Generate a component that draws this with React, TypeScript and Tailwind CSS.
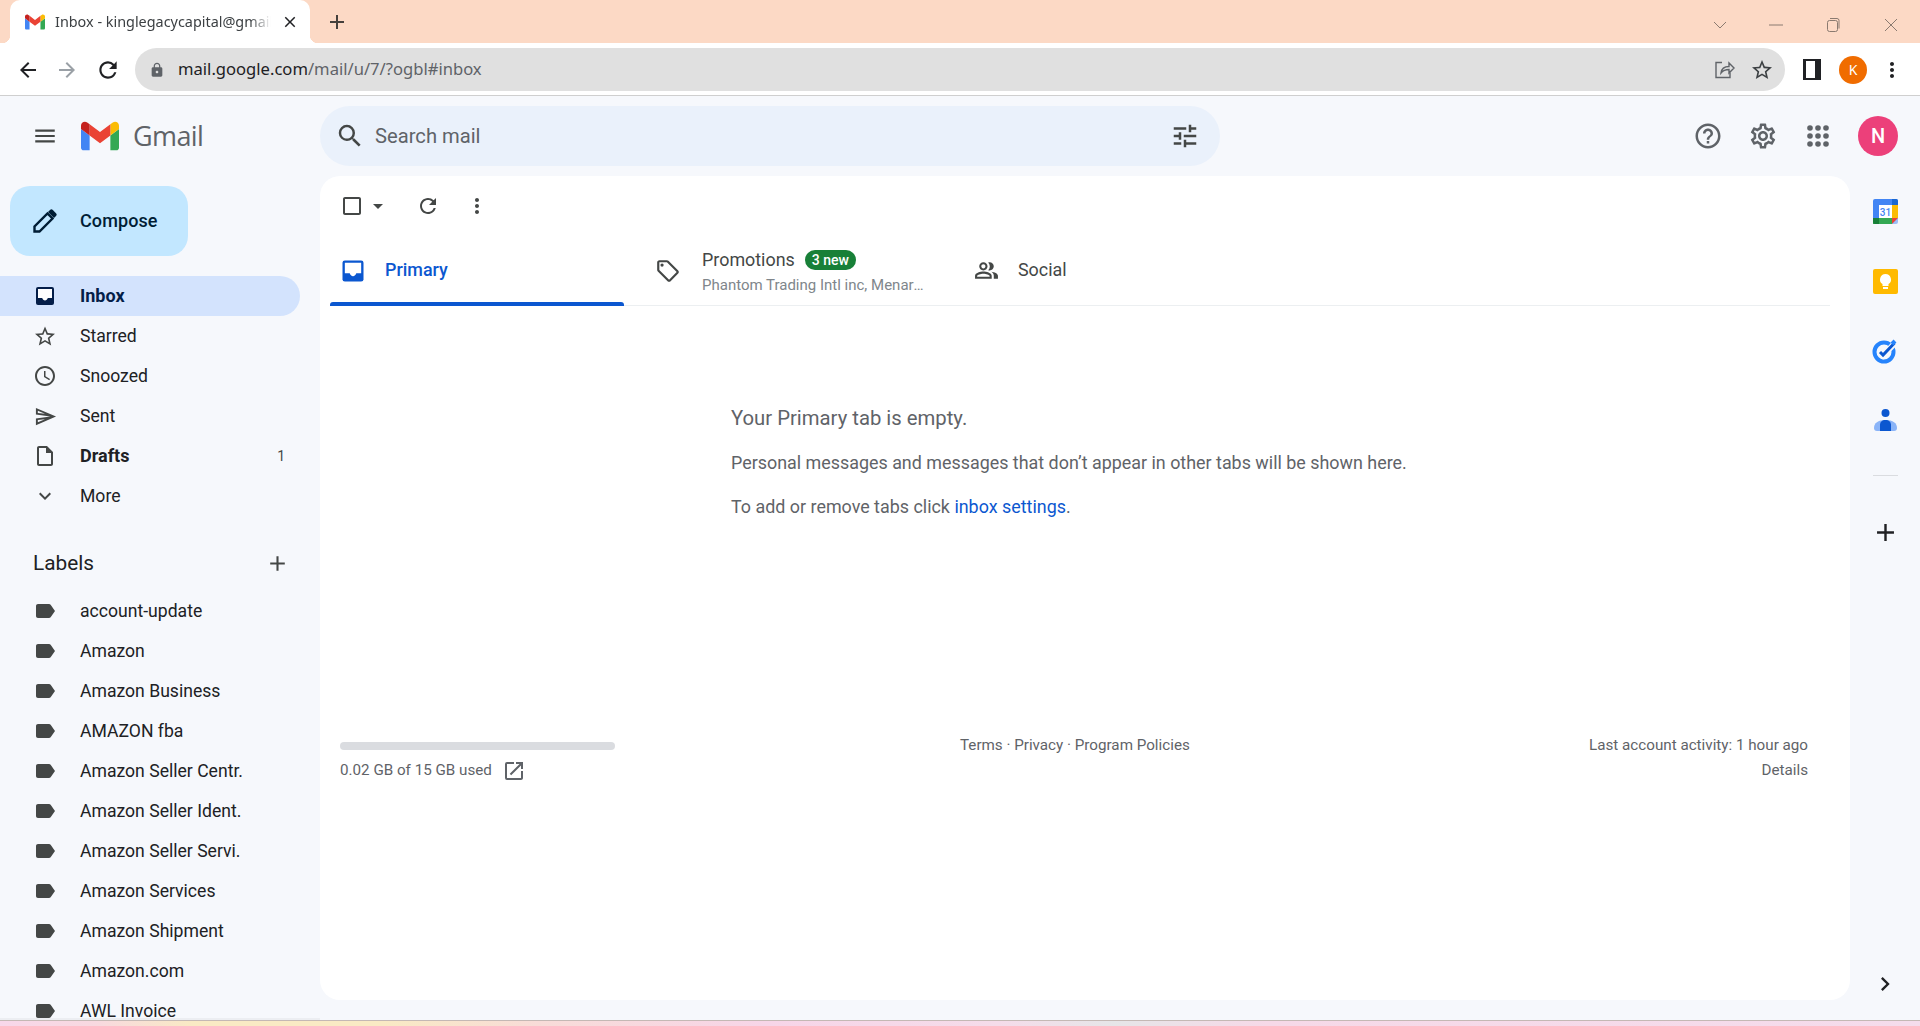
import type { ReactNode } from "react";
import {
  MdAccessTime,
  MdAdd,
  MdArrowBack,
  MdArrowDropDown,
  MdArrowForward,
  MdCheckBoxOutlineBlank,
  MdChevronRight,
  MdClose,
  MdExpandMore,
  MdLabel,
  MdLock,
  MdMenu,
  MdMoreVert,
  MdOpenInNew,
  MdOutlineHelpOutline,
  MdOutlineInsertDriveFile,
  MdOutlineLocalOffer,
  MdOutlinePeopleAlt,
  MdOutlineSend,
  MdOutlineSettings,
  MdRefresh,
  MdSearch,
  MdStarBorder,
  MdTune,
} from "react-icons/md";

const LABELS = [
  "account-update",
  "Amazon",
  "Amazon Business",
  "AMAZON fba",
  "Amazon Seller Centr.",
  "Amazon Seller Ident.",
  "Amazon Seller Servi.",
  "Amazon Services",
  "Amazon Shipment",
  "Amazon.com",
  "AWL Invoice",
];

function GmailLogo({ size }: { size: number }) {
  return (
    <svg width={size} height={size} viewBox="0 0 24 24">
      <path fill="#4285f4" d="M1.636 21.002h3.819v-9.273L0 7.638v11.728c0 .904.732 1.636 1.636 1.636" />
      <path fill="#34a853" d="M18.545 21.002h3.819c.904 0 1.636-.732 1.636-1.636V7.638l-5.455 4.091" />
      <path fill="#fbbc04" d="M18.545 4.638v7.091L24 7.638V5.457c0-2.023-2.309-3.178-3.927-1.964" />
      <path fill="#ea4335" d="M5.455 11.729V4.638L12 9.548l6.545-4.91v7.091L12 16.64" />
      <path fill="#c5221f" d="M0 5.457v2.181l5.455 4.091V4.638L3.927 3.493C2.309 2.28 0 3.434 0 5.457" />
    </svg>
  );
}

function InboxIcon({ size, color }: { size: number; color: string }) {
  return (
    <svg width={size} height={size} viewBox="0 0 24 24">
      <rect x="3" y="3" width="18" height="18" rx="2" fill={color} />
      <path d="M5 5h14v9h-4.200c-.5 1.400-1.500 2.500-2.800 2.500S9.700 15.400 9.200 14H5z" fill="#fff" />
    </svg>
  );
}

function PencilIcon() {
  return (
    <svg width="24" height="24" viewBox="0 0 24 24">
      <path d="M1.500 22.500v-5L14.500 4.500l5 5-13 13z" fill="none" stroke="currentColor" strokeWidth="2.400" />
      <path d="M15 3l2-2a2 2 0 0 1 2.800 0l3.200 3.200a2 2 0 0 1 0 2.800l-2 2z" fill="currentColor" />
    </svg>
  );
}

function AppsIcon() {
  return (
    <svg width="30" height="30" viewBox="0 0 30 30" fill="#5f6368">
      {[7, 15, 23].map((y) =>
        [7, 15, 23].map((x) => <circle key={`${x}-${y}`} cx={x} cy={y} r="2.800" />),
      )}
    </svg>
  );
}

function TitleBar() {
  return (
    <div className="flex h-[43px] items-end bg-[#fcd9c5]">
      <div className="relative ml-[10px] flex h-[43px] w-[300px] items-center rounded-t-[10px] bg-white">
        <div className="absolute bottom-0 left-[-8px] h-[8px] w-[8px] bg-[radial-gradient(circle_at_0_0,transparent_8px,white_8.5px)]" />
        <div className="absolute bottom-0 right-[-8px] h-[8px] w-[8px] bg-[radial-gradient(circle_at_100%_0,transparent_8px,white_8.5px)]" />
        <div className="ml-[15px] flex w-[20px] justify-center">
          <GmailLogo size={20} />
        </div>
        <div className="ml-[10px] w-[216px] overflow-hidden whitespace-nowrap font-['Noto_Sans',sans-serif] text-[14.4px] text-[#3c4043] [mask-image:linear-gradient(90deg,#000_90%,transparent)]">
          Inbox - kinglegacycapital@gmail.com - Gmail
        </div>
        <MdClose className="ml-[10px] text-[#202124]" size={18} />
      </div>
      <div className="ml-[15px] flex h-[43px] items-center">
        <MdAdd className="text-[#45403c]" size={24} />
      </div>
      <div className="ml-auto flex h-[36px] items-center pr-[21px] text-[#8a7a70]">
        <svg width="16" height="16" viewBox="0 0 16 16" fill="none" stroke="currentColor" strokeWidth="1">
          <path d="M2 5l6 6 6-6" />
        </svg>
        <svg className="ml-[40px]" width="16" height="16" viewBox="0 0 16 16" fill="none" stroke="currentColor" strokeWidth="1">
          <path d="M1 8h14" />
        </svg>
        <svg className="ml-[41px]" width="16" height="16" viewBox="0 0 16 16" fill="none" stroke="currentColor" strokeWidth="1">
          <rect x="2.5" y="3.5" width="10" height="11" rx="2" />
          <path d="M5 1.5h7a2 2 0 0 1 2 2v8" />
        </svg>
        <svg className="ml-[42px]" width="16" height="16" viewBox="0 0 16 16" fill="none" stroke="currentColor" strokeWidth="1">
          <path d="M2 2l12 12M14 2L2 14" />
        </svg>
      </div>
    </div>
  );
}

function AddressBar() {
  return (
    <div className="flex h-[53px] items-start border-b border-[#cfcfcf] bg-white pt-[5px]">
      <div className="flex h-[43px] w-[135px] items-center pl-[16px]">
        <MdArrowBack className="text-[#202124]" size={24} />
        <MdArrowForward className="ml-[15px] text-[#9aa0a6]" size={24} />
        <MdRefresh className="ml-[16px] text-[#202124]" size={26} />
      </div>
      <div className="flex h-[43px] w-[1650px] items-center rounded-full bg-[#e0e0e0] pl-[14px] pr-[11px]">
        <MdLock className="text-[#5f6368]" size={16} />
        <div className="ml-[13px] font-['Noto_Sans',sans-serif] text-[16.6px] text-[#5f6368]">
          <span className="text-[#202124]">mail.google.com</span>/mail/u/7/?ogbl#inbox
        </div>
        <svg className="ml-auto text-[#5f6368]" width="22" height="22" viewBox="0 0 22 22" fill="none" stroke="currentColor" strokeWidth="1.4">
          <path d="M9 3.5H3v15h14v-5" />
          <path d="M8 14c.5-4 3.5-6.500 8-6.500V4l5 5-5 5v-3.500c-3.500 0-6 1-8 3.500z" />
        </svg>
        <MdStarBorder className="ml-[15px] text-[#3c4043]" size={24} />
      </div>
      <div className="flex h-[43px] flex-1 items-center pl-[18px]">
        <div className="flex h-[21px] w-[18px] items-center justify-center border-y-[2px] border-l-[3px] border-r-[6px] border-[#202124]" />
        <div className="ml-[18px] flex h-[28px] w-[28px] items-center justify-center rounded-full bg-[#f06c00] font-['Noto_Sans',sans-serif] text-[14px] text-white">
          K
        </div>
        <MdMoreVert className="ml-[13px] text-[#202124]" size={24} />
      </div>
    </div>
  );
}

function Header() {
  return (
    <div className="flex h-[80px] items-center">
      <div className="flex w-[320px] items-center pl-[32px]">
        <MdMenu className="text-[#444746]" size={26} />
        <div className="ml-[23px]">
          <GmailLogo size={38} />
        </div>
        <span className="ml-[14px] font-['Open_Sans',sans-serif] text-[27px] tracking-[-0.6px] text-[#5f6368]">Gmail</span>
      </div>
      <div className="flex h-[60px] w-[900px] items-center rounded-full bg-[#eaf1fb] pl-[15px] pr-[20px]">
        <MdSearch className="text-[#444746]" size={30} />
        <span className="ml-[10px] text-[20.2px] text-[#5f6368]">Search mail</span>
        <MdTune className="ml-auto text-[#444746]" size={30} />
      </div>
      <div className="flex flex-1 items-center pl-[473px]">
        <MdOutlineHelpOutline className="text-[#5f6368]" size={30} />
        <MdOutlineSettings className="ml-[25px] text-[#5f6368]" size={30} />
        <div className="ml-[25px]">
          <AppsIcon />
        </div>
        <div className="ml-[25px] flex h-[40px] w-[40px] items-center justify-center rounded-full bg-[#ec407a] text-[20px] font-medium text-white">
          N
        </div>
      </div>
    </div>
  );
}

function NavRow({
  icon,
  label,
  active,
  bold,
  count,
}: {
  icon: ReactNode;
  label: string;
  active?: boolean;
  bold?: boolean;
  count?: string;
}) {
  return (
    <div
      className={`flex h-10 w-[300px] shrink-0 items-center rounded-r-full pl-[33px] text-[17.6px] ${
        active ? "bg-[#d3e3fd] text-[#041e49]" : "text-[#202124]"
      }`}
    >
      <div className="flex w-[24px] justify-center">{icon}</div>
      <span className={`ml-[23px] ${bold ? "pb-[2px] text-[18px] font-bold" : ""}`}>{label}</span>
      {count && <span className="ml-auto pr-[15px] text-[14px] text-[#444746]">{count}</span>}
    </div>
  );
}

function Sidebar() {
  return (
    <div className="relative flex w-[320px] shrink-0 flex-col overflow-hidden pt-[10px]">
      <div className="ml-[10px] flex h-[70px] w-[178px] shrink-0 items-center rounded-[20px] bg-[#c2e7ff] pl-[23px] text-[18px] text-[#001d35]">
        <PencilIcon />
        <span className="ml-[23px] pb-[2px] font-medium tracking-[0.1px]">Compose</span>
      </div>
      <div className="mt-[20px] flex flex-col">
        <NavRow active bold label="Inbox" icon={<InboxIcon size={28} color="#041e49" />} />
        <NavRow label="Starred" icon={<MdStarBorder className="text-[#444746]" size={25} />} />
        <NavRow label="Snoozed" icon={<MdAccessTime className="text-[#444746]" size={26} />} />
        <NavRow label="Sent" icon={<MdOutlineSend className="text-[#444746]" size={23} />} />
        <NavRow bold label="Drafts" count="1" icon={<MdOutlineInsertDriveFile className="text-[#444746]" size={26} />} />
        <NavRow label="More" icon={<MdExpandMore className="text-[#444746]" size={24} />} />
      </div>
      <div className="mt-[27px] mb-[8px] flex h-10 shrink-0 items-center justify-between pl-[33px] pr-[30px] text-[20.8px] text-[#202124]">
        <span className="pt-[2px]">Labels</span>
        <MdAdd className="text-[#444746]" size={25} />
      </div>
      {LABELS.map((label) => (
        <NavRow key={label} label={label} icon={<MdLabel className="text-[#444746]" size={24} />} />
      ))}
      <div className="absolute bottom-0 left-0 h-[2px] w-full bg-[#eceef2]" />
    </div>
  );
}

function InboxCard() {
  return (
    <div className="flex h-[824px] w-[1530px] shrink-0 flex-col rounded-[20px] bg-white">
      <div className="flex h-[60px] shrink-0 items-center pl-[20px] text-[#444746]">
        <MdCheckBoxOutlineBlank size={24} />
        <MdArrowDropDown className="ml-[2px]" size={24} />
        <MdRefresh className="ml-[26px]" size={24} />
        <MdMoreVert className="ml-[25px]" size={24} />
      </div>
      <div className="ml-[10px] mr-[20px] flex h-[70px] shrink-0 border-b border-[#eceff1]">
        <div className="relative flex w-[294px] items-center pl-[9px] text-[17.9px] font-medium text-[#0b57d0]">
          <InboxIcon size={28} color="#0b57d0" />
          <span className="ml-[18px]">Primary</span>
          <div className="absolute bottom-[-1px] left-0 h-[4px] w-full rounded-t-[3px] bg-[#0b57d0]" />
        </div>
        <div className="flex w-[331px] items-center pl-[31px]">
          <MdOutlineLocalOffer className="text-[#444746]" size={26} />
          <div className="ml-[21px] flex flex-col pt-[2px]">
            <div className="flex items-center text-[17.9px] leading-[24px] text-[#444746]">
              Promotions
              <span className="ml-[10px] flex h-[20px] w-[51px] items-center justify-center rounded-full bg-[#188038] text-[14px] font-medium text-white">
                3 new
              </span>
            </div>
            <div className="mt-[3px] w-[228px] truncate text-[15px] leading-[20px] text-[#80868b]">
              Phantom Trading Intl inc, Menards and more
            </div>
          </div>
        </div>
        <div className="flex items-center pl-[19px] text-[17.9px] text-[#444746]">
          <MdOutlinePeopleAlt size={25} />
          <span className="ml-[19px]">Social</span>
        </div>
      </div>
      <div className="ml-[411px] mt-[98px] text-[#5f6368]">
        <div className="text-[20.3px] leading-[28px]">Your Primary tab is empty.</div>
        <div className="mt-[19px] text-[17.9px] leading-[24px]">
          Personal messages and messages that don’t appear in other tabs will be shown here.
        </div>
        <div className="mt-[20px] text-[17.9px] leading-[24px]">
          To add or remove tabs click <span className="text-[#0b57d0]">inbox settings</span>.
        </div>
      </div>
      <div className="mt-[214px] flex pl-[20px] pr-[42px] text-[15.2px] leading-[25px] text-[#5f6368]">
        <div className="flex w-[620px] shrink-0 flex-col">
          <div className="flex h-[25px] items-center">
            <div className="h-[8px] w-[275px] rounded-full bg-[#dadce0]" />
          </div>
          <div className="flex h-[25px] items-center">
            0.02 GB of 15 GB used
            <MdOpenInNew className="ml-[10px]" size={24} />
          </div>
        </div>
        <div>Terms · Privacy · Program Policies</div>
        <div className="ml-auto flex flex-col items-end">
          <div>Last account activity: 1 hour ago</div>
          <div>Details</div>
        </div>
      </div>
    </div>
  );
}

function AddonRail() {
  return (
    <div className="flex flex-1 flex-col items-center pt-[23px]">
      <svg width="25" height="25" viewBox="0 0 25 25">
        <rect width="25" height="25" rx="2" fill="#4285f4" />
        <rect x="19" y="6" width="6" height="13" fill="#fbbc04" />
        <rect y="19" width="19" height="6" fill="#34a853" />
        <rect x="6" y="6" width="13" height="13" fill="#fff" />
        <path d="M19 25v-6h6z" fill="#ea4335" />
        <path d="M19 25h6v-6z" fill="#f6f8fc" opacity="0.5" />
        <path d="M0 19h6v6H2a2 2 0 0 1-2-2z" fill="#188038" />
        <path d="M19 0h4a2 2 0 0 1 2 2v4h-6z" fill="#1967d2" />
        <text x="12.500" y="16.500" textAnchor="middle" fontFamily="Roboto, sans-serif" fontSize="10" fontWeight="500" fill="#4285f4">
          31
        </text>
      </svg>
      <svg className="mt-[45px]" width="25" height="25" viewBox="0 0 25 25">
        <rect width="25" height="25" rx="2" fill="#ffba00" />
        <path d="M12.500 5a5.500 5.500 0 0 0-3 10.100V17h6v-1.900a5.500 5.500 0 0 0-3-10.100z" fill="#fff" />
        <rect x="10" y="18" width="5" height="2" fill="#fff" />
      </svg>
      <svg className="mt-[43px]" width="28" height="28" viewBox="0 0 28 28" fill="none">
        <circle cx="13" cy="15" r="9.500" stroke="#2684fc" strokeWidth="4" />
        <path d="M8.500 15l3.500 3.500L25 5" stroke="#f6f8fc" strokeWidth="6" />
        <path d="M9 15l3 3L23.500 6" stroke="#0b57d0" strokeWidth="3" />
        <path d="M21 7l3-3" stroke="#2684fc" strokeWidth="4" />
      </svg>
      <svg className="mt-[43px]" width="25" height="24" viewBox="0 0 25 24">
        <circle cx="12.500" cy="5" r="4" fill="#0b57d0" />
        <path d="M4 23a3 3 0 0 1-3-3c0-5 4-8 11.500-8S24 15 24 20a3 3 0 0 1-3 3z" fill="#8ab4f8" />
        <path d="M7 23v-6c0-3 2-5 5.500-5S18 14 18 17v6z" fill="#0b57d0" />
      </svg>
      <div className="mt-[43px] h-[1px] w-[25px] bg-[#dadce0]" />
      <MdAdd className="mt-[42px] text-[#202124]" size={29} />
      <MdChevronRight className="mt-[423px] text-[#202124]" size={28} />
    </div>
  );
}

export default function App() {
  return (
    <div className="flex h-[1026px] w-[1920px] flex-col overflow-hidden bg-[#f6f8fc] font-['Roboto',sans-serif]">
      <TitleBar />
      <AddressBar />
      <div className="flex min-h-0 flex-1 flex-col">
        <Header />
        <div className="flex min-h-0 flex-1">
          <Sidebar />
          <div className="flex h-full flex-1">
            <InboxCard />
            <AddonRail />
          </div>
        </div>
      </div>
      <div className="h-[6px] shrink-0 border-t border-[#c4b8b4] bg-[linear-gradient(90deg,#f8d7ea_0%,#f8d9e0_5%,#f9eac4_10%,#f9eac4_20%,#f8dcd8_28%,#f7d5e8_40%,#f5dcea_52%,#e6e6e8_58%,#f6d9e8_66%,#f5dcec_100%)]" />
    </div>
  );
}
